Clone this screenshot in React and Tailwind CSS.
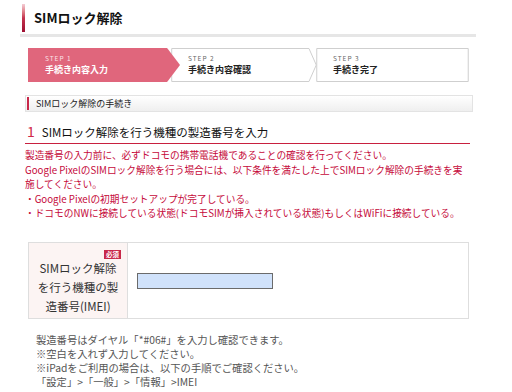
import React from "react";

const font = { fontFamily: '"Noto Sans CJK JP", "Noto Sans", sans-serif' };

function Step({ n, label, active, arrow, className }) {
  return (
    <div className={`relative h-[34px] ${className}`}>
      <svg className="absolute inset-0 w-full h-full" preserveAspectRatio="none" viewBox="0 0 100 34">
        {active ? (
          <polygon points="0,0 91.5,0 100,17 91.5,34 0,34" fill="#e0667c" />
        ) : arrow ? (
          <polygon points="0.5,0.5 94.5,0.5 99.5,17 94.5,33.5 0.5,33.5" fill="#fff" stroke="#cfcfcf" strokeWidth="1" vectorEffect="non-scaling-stroke" />
        ) : (
          <polygon points="0.5,0.5 99.5,0.5 99.5,33.5 0.5,33.5" fill="#fff" stroke="#cfcfcf" strokeWidth="1" vectorEffect="non-scaling-stroke" />
        )}
      </svg>
      <div className="relative pl-[17px] pt-[6px] flex flex-col gap-[1px]">
        <div className={`h-[8px] text-[6.5px] leading-[8px] tracking-[1px] ${active ? "text-[#fbe3e8]" : "text-[#666]"}`}>STEP {n}</div>
        <div className={`h-[13px] text-[9px] leading-[13px] font-bold ${active ? "text-white" : "text-[#222]"}`}>{label}</div>
      </div>
    </div>
  );
}

export default function App() {
  return (
    <div className="w-[512px] h-[392px] overflow-hidden bg-white relative" style={font}>
      {/* Title */}
      <div className="flex items-center pl-[22px] pt-[4px]">
        <div className="w-[3px] h-[28px] bg-gradient-to-b from-[#f3cdd5] via-[#c4334f] to-[#9e0b30]" />
        <div className="ml-[9px] text-[13px] font-semibold text-[#111] leading-[28px]">SIMロック解除</div>
      </div>
      <div className="ml-[20px] w-[456px] h-[3px] bg-[#e6e6e6] mt-[2px]" />

      {/* Steps */}
      <div className="flex ml-[28px] mt-[11px]">
        <Step n="1" label="手続き内容入力" active className="w-[152px] z-20" />
        <Step n="2" label="手続き内容確認" arrow className="w-[146px] -ml-[9px] z-10" />
        <Step n="3" label="手続き完了" className="w-[153px] -ml-[1px]" />
      </div>

      {/* Section header */}
      <div className="ml-[25px] w-[448px] mt-[13px] h-[17px] border border-[#e3e3e3] bg-gradient-to-b from-[#ffffff] to-[#efefef] flex items-center">
        <div className="ml-[1px] w-[2px] h-[13px] bg-[#c8284a]" />
        <div className="ml-[7px] text-[9px] text-[#222] leading-[15px]">SIMロック解除の手続き</div>
      </div>

      {/* Heading */}
      <div className="ml-[25px] w-[445px] mt-[10px] border-b border-[#c8203f] pb-[2px] flex items-baseline">
        <span className="ml-[2px] text-[14px] text-[#d0284a] leading-[18px]">1</span>
        <span className="ml-[7px] text-[11.5px] text-[#111] leading-[18px]">SIMロック解除を行う機種の製造番号を入力</span>
      </div>

      {/* Red notes */}
      <div className="ml-[25px] mt-[4px] text-[9.7px] leading-[14.5px] text-[#c5093a] whitespace-nowrap">
        <div>製造番号の入力前に、必ずドコモの携帯電話機であることの確認を行ってください。</div>
        <div>Google PixelのSIMロック解除を行う場合には、以下条件を満たした上でSIMロック解除の手続きを実</div>
        <div>施してください。</div>
        <div>・Google Pixelの初期セットアップが完了している。</div>
        <div>・ドコモのNWに接続している状態(ドコモSIMが挿入されている状態)もしくはWiFiに接続している。</div>
      </div>

      {/* Form table */}
      <div className="ml-[28px] mt-[21px] w-[441px] h-[77px] border border-[#dedede] flex">
        <div className="w-[99px] bg-[#fcf4f3] border-r border-[#dedede] flex flex-col items-center pt-[7px]">
          <div className="self-end mr-[6px] bg-[#c8284a] text-white text-[6.5px] leading-[9px] px-[2px] font-bold">必須</div>
          <div className="text-[11.5px] leading-[19px] text-[#333] text-center">
            SIMロック解除<br />を行う機種の製<br />造番号(IMEI)
          </div>
        </div>
        <div className="flex-1 flex items-center pl-[9px]">
          <div className="w-[136px] h-[16px] bg-[#d0e2fb] border border-[#6b6b6b] mt-[2px]" />
        </div>
      </div>

      {/* Gray notes */}
      <div className="ml-[36px] mt-[14px] text-[10.3px] leading-[14.3px] text-[#555] whitespace-nowrap">
        <div>製造番号はダイヤル「*#06#」を入力し確認できます。</div>
        <div>※空白を入れず入力してください。</div>
        <div>※iPadをご利用の場合は、以下の手順でご確認ください。</div>
        <div>「設定」&gt;「一般」&gt;「情報」&gt;IMEI</div>
      </div>
    </div>
  );
}
